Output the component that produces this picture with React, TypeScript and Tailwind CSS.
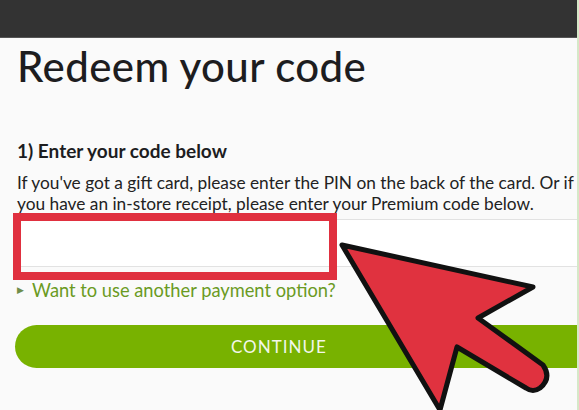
import React from "react";

export default function App() {
  return (
    <div
      className="relative w-[579px] h-[410px] overflow-hidden bg-[#fafafa] border-r-2 border-[#d6e8c8]"
      style={{ fontFamily: 'Lato, "Open Sans", "Liberation Sans", sans-serif' }}
    >
      {/* Top bar */}
      <div className="h-[38px] bg-[#333333] border-b border-[#555]" />

      <div className="pl-[17px]">
        <h1 className="mt-[3px] text-[42px] leading-[50px] font-medium tracking-[0.4px] text-[#1d1d1f]">
          Redeem your code
        </h1>

        <h2 className="mt-[48px] text-[19px] leading-[24px] font-bold text-[#1d1d1f]">
          1) Enter your code below
        </h2>

        <p className="mt-[9px] text-[17.3px] leading-[21px] text-[#222]">
          If you've got a gift card, please enter the PIN on the back of the card. Or if
          <br />
          you have an in-store receipt, please enter your Premium code below.
        </p>

        {/* Code input with annotation */}
        <div className="relative mt-[5px]">
          <div className="h-[48px] bg-white border-y border-[#e2e2e2]" />
          <div className="absolute left-[-4px] top-[-6px] w-[324px] h-[67px] border-[8px] border-[#e0303f]" />
        </div>

        <div className="mt-[12px] flex items-center gap-[8px] text-[#6a9a23]">
          <span className="text-[9px] text-[#6f8d4a]">▶</span>
          <span className="text-[18.3px] leading-[22px]">Want to use another payment option?</span>
        </div>

        <button className="mt-[24px] ml-[-2px] w-[600px] h-[43px] rounded-full bg-[#78b200] text-left pl-[216px] text-[17px] tracking-[1px] text-[#f2f7ea]">
          CONTINUE
        </button>
      </div>

      {/* Cursor arrow annotation */}
      <svg
        className="absolute left-0 top-0 pointer-events-none"
        width="579"
        height="410"
        viewBox="0 0 579 410"
      >
        <path
          d="M342 245 L533 287 L478 318 L543 365 Q552 378 540 388 Q533 393 526 388 L457 347 L440 410 Z"
          fill="#e0323f"
          stroke="#111"
          strokeWidth="5"
          strokeLinejoin="round"
        />
      </svg>
    </div>
  );
}
